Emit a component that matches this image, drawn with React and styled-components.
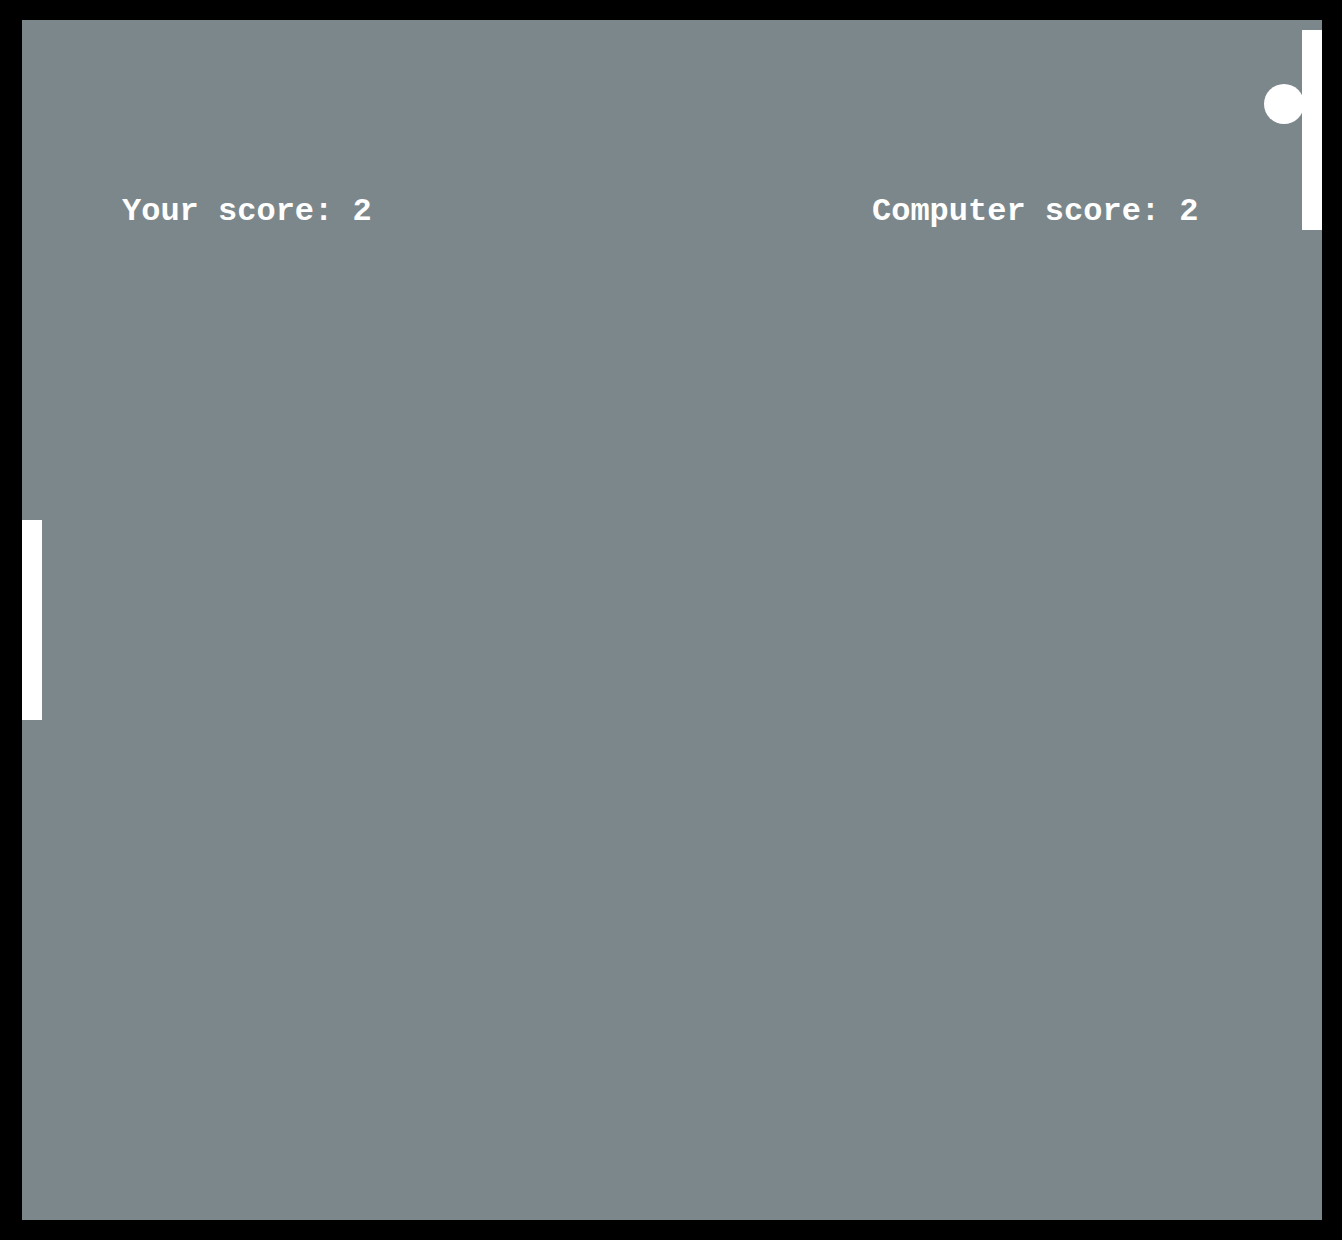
import React from 'react'
import styled, { createGlobalStyle } from 'styled-components'

const GlobalStyle = createGlobalStyle`
  html, body {
    margin: 0;
    padding: 0;
    background: #000;
  }
`;

const Frame = styled.div`
  width: 1342px;
  height: 1240px;
  box-sizing: border-box;
  padding: 20px 20px 20px 22px;
  background: #000;
`;

const Field = styled.div`
  position: relative;
  width: 1300px;
  height: 1200px;
  background: #7c878b;
  overflow: hidden;
`;

const ScoreRow = styled.div`
  display: grid;
  grid-template-columns: 750px auto;
  padding: 176px 0 0 100px;
`;

const Score = styled.div`
  font-family: "Liberation Mono", "Courier New", monospace;
  font-weight: bold;
  font-size: 32px;
  line-height: 32px;
  color: #fff;
  white-space: pre;
`;

const Paddle = styled.div`
  position: absolute;
  top: ${({ top }) => top}px;
  ${({ side }) => side}: 0;
  width: 20px;
  height: 200px;
  background: #fff;
`;

const Ball = styled.div`
  position: absolute;
  left: ${({ x }) => x - 20}px;
  top: ${({ y }) => y - 20}px;
  width: 40px;
  height: 40px;
  border-radius: 50%;
  background: #fff;
`;

const App = () => {
  return <>
    <GlobalStyle />
    <Frame>
      <Field>
        <ScoreRow>
          <Score>Your score: 2</Score>
          <Score>Computer score: 2</Score>
        </ScoreRow>
        <Paddle side="left" top={500} />
        <Paddle side="right" top={10} />
        <Ball x={1262} y={84} />
      </Field>
    </Frame>
  </>
}

export default App
